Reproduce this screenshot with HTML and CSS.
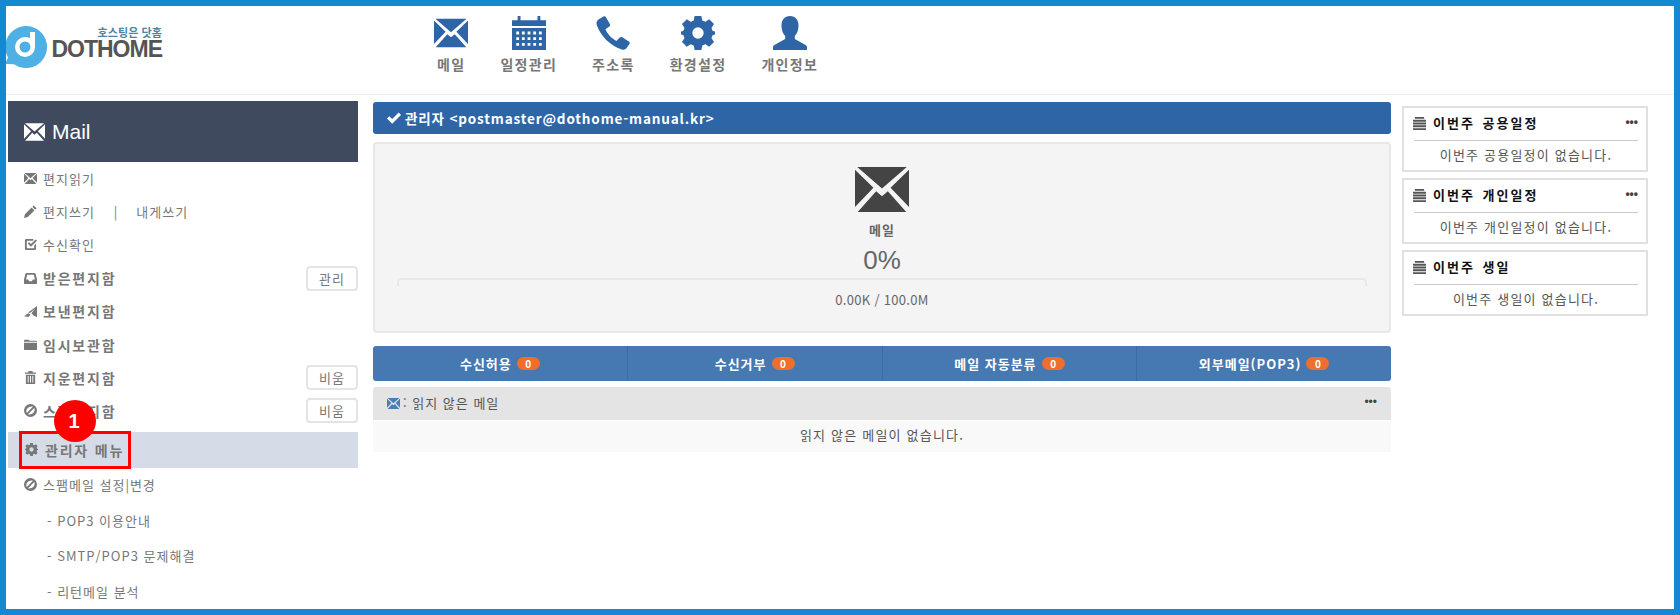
FILE: index.html
```html
<!DOCTYPE html>
<html lang="ko">
<head>
  <meta charset="UTF-8" />
  <title>DOTHOME Mail</title>
  <link rel="stylesheet" href="styles.css">
</head>
<body>

  <svg class="sprite" xmlns="http://www.w3.org/2000/svg">
    <symbol id="i-mail" viewBox="0 0 24 20">
      <path d="M1 0H23L12 9.5Z M0 1.2V17.8L8.2 9.2Z M24 1.2V17.8L15.8 9.2Z M1.2 20L9.4 10.8 12 13 14.6 10.8 22.8 20Z"/>
    </symbol>
    <symbol id="i-cal" viewBox="0 0 24 24">
      <path fill-rule="evenodd" d="M0 3H4V0H6V3H18V0H20V3H24V7H0Z M0 8.5H24V24H0Z M3 11V13H5V11Z M7 11V13H9V11Z M11 11V13H13V11Z M15 11V13H17V11Z M19 11V13H21V11Z M3 15V17H5V15Z M7 15V17H9V15Z M11 15V17H13V15Z M15 15V17H17V15Z M19 15V17H21V15Z M3 19V21H5V19Z M7 19V21H9V19Z M11 19V21H13V19Z M15 19V21H17V19Z M19 19V21H21V19Z"/>
    </symbol>
    <symbol id="i-phone" viewBox="0 0 24 24">
      <path d="M5.200 0.400C6 0 6.600 0.200 7 0.800L9.800 5.600C10.200 6.300 10 6.900 9.400 7.400L6.600 9.400C7.800 12.400 10.800 15.800 14.400 17.600L16.600 15.300C17.200 14.700 17.800 14.600 18.500 15L23.200 18C23.900 18.500 24 19.100 23.600 19.800L21.600 22.600C20.800 23.600 19.600 24 18.200 23.600C9.600 20.900 3.400 14.200 0.600 6.600C0.100 5 0.300 3.600 1.500 2.600Z"/>
    </symbol>
    <symbol id="i-gear" viewBox="0 0 24 24">
      <path fill-rule="evenodd" d="M9.600 0H14.400L15 3.200 17.200 4.100 19.900 2.300 23.300 5.700 21.500 8.400 22.400 10.600 24 11V13L22.400 13.400 21.500 15.600 23.300 18.300 19.900 21.700 17.200 19.900 15 20.800 14.400 24H9.600L9 20.800 6.800 19.900 4.100 21.700 0.700 18.300 2.500 15.600 1.600 13.400 0 13V11L1.600 10.600 2.500 8.400 0.700 5.700 4.100 2.300 6.800 4.100 9 3.200Z M12 8A4 4 0 1 0 12 16 4 4 0 1 0 12 8Z"/>
    </symbol>
    <symbol id="i-user" viewBox="0 0 24 24">
      <path d="M12 0C15.800 0 18 2.800 18 6.800 18 9.800 17 12.400 15.400 14.200V16.200L23 20.400C23.700 20.800 24 21.400 24 22.200V24H0V22.200C0 21.400 0.300 20.800 1 20.400L8.600 16.200V14.200C7 12.400 6 9.800 6 6.800 6 2.800 8.200 0 12 0Z"/>
    </symbol>
    <symbol id="i-pencil" viewBox="0 0 14 14">
      <path d="M10.500 0.500L13.500 3.500 12 5 9 2Z M8.200 2.800L11.200 5.800 4 13 0 14 1 10Z"/>
    </symbol>
    <symbol id="i-check" viewBox="0 0 14 14">
      <path d="M2.500 1H10V3H3V11H11V8L13 6V11.500C13 12.400 12.400 13 11.500 13H2.500C1.600 13 1 12.400 1 11.500V2.500C1 1.600 1.600 1 2.500 1Z M4 6L5.500 4.500 7.500 6.500 12.500 1.500 14 3 7.500 9.500Z"/>
    </symbol>
    <symbol id="i-inbox" viewBox="0 0 14 14">
      <path fill-rule="evenodd" d="M3 1H11C11.800 1 12.300 1.400 12.500 2L14 8V12C14 12.600 13.600 13 13 13H1C0.400 13 0 12.600 0 12V8L1.500 2C1.700 1.400 2.200 1 3 1Z M3.500 3L2.200 8H4.500L5.500 10H8.500L9.500 8H11.800L10.500 3Z"/>
    </symbol>
    <symbol id="i-send" viewBox="0 0 14 14">
      <path d="M14 1V13L10.500 11.500 8 9 12 4 6.500 8.500 4.500 8Z M0 12L4.500 9 7 10 5 13Z"/>
    </symbol>
    <symbol id="i-folder" viewBox="0 0 14 14">
      <path d="M0 4V2.800C0 2.200 0.400 2 1 2H5L6 3H13C13.600 3 14 3.400 14 4Z M0 5H14V12C14 12.600 13.600 13 13 13H1C0.400 13 0 12.600 0 12Z"/>
    </symbol>
    <symbol id="i-trash" viewBox="0 0 14 14">
      <path fill-rule="evenodd" d="M5 0H9L9.600 1.500H13V3H1V1.500H4.400Z M2 4H12V14H2Z M4 5.500V12.500H5V5.500Z M6.500 5.500V12.500H7.500V5.500Z M9 5.500V12.500H10V5.500Z"/>
    </symbol>
    <symbol id="i-ban" viewBox="0 0 14 14">
      <path fill-rule="evenodd" d="M7 0A7 7 0 1 1 7 14 7 7 0 1 1 7 0Z M9.600 3L3 9.600C2.200 7.900 2.400 6 3.800 4.600S7.900 2.200 9.600 3Z M11 4.400C11.800 6.100 11.600 8 10.200 9.400S6.100 11.800 4.400 11Z"/>
    </symbol>
    <symbol id="i-list" viewBox="0 0 14 14">
      <path d="M2 0H12V2H2Z M0 3H14V5H0Z M0 6H14V8H0Z M0 9H14V11H0Z M0 12H14V14H0Z"/>
    </symbol>
    <symbol id="i-ok" viewBox="0 0 14 14">
      <path d="M0 7.500L2.300 5.200 5.200 8.100 11.700 1.600 14 3.900 5.200 12.700Z"/>
    </symbol>
  </svg>

  <div class="frame">
    <header class="top">
      <div class="logo">
        <svg class="logo-mark" viewBox="0 0 42 42">
          <path fill="#4fb0e6" d="M21 0A21 21 0 1 1 9 38.200L0 38 3 31.500A21 21 0 0 1 21 0Z"/>
          <path fill="#fff" fill-rule="evenodd" d="M25 6H30V21A10 10 0 1 1 20 11C22 11 23.600 11.500 25 12.300Z M20 15.500A5.500 5.500 0 1 0 20 26.500 5.500 5.500 0 1 0 20 15.500Z"/>
        </svg>
        <div class="logo-text">
          <span class="logo-sub">호스팅은 닷홈</span>
          <span class="logo-name">DOTHOME</span>
        </div>
      </div>
      <nav class="top-nav">
        <a class="top-item"><svg class="top-icon"><use href="#i-mail"/></svg>메일</a>
        <a class="top-item"><svg class="top-icon"><use href="#i-cal"/></svg>일정관리</a>
        <a class="top-item"><svg class="top-icon"><use href="#i-phone"/></svg>주소록</a>
        <a class="top-item"><svg class="top-icon"><use href="#i-gear"/></svg>환경설정</a>
        <a class="top-item"><svg class="top-icon"><use href="#i-user"/></svg>개인정보</a>
      </nav>
    </header>

    <div class="columns">
      <aside class="side">
        <div class="side-title"><svg class="side-title-icon"><use href="#i-mail"/></svg>Mail</div>
        <ul class="menu">
          <li class="menu-row"><svg class="ico"><use href="#i-mail"/></svg>편지읽기</li>
          <li class="menu-row"><svg class="ico"><use href="#i-pencil"/></svg>편지쓰기<span class="sep">|</span>내게쓰기</li>
          <li class="menu-row"><svg class="ico"><use href="#i-check"/></svg>수신확인</li>
          <li class="menu-row strong"><svg class="ico"><use href="#i-inbox"/></svg>받은편지함<button class="mini">관리</button></li>
          <li class="menu-row strong"><svg class="ico"><use href="#i-send"/></svg>보낸편지함</li>
          <li class="menu-row strong"><svg class="ico"><use href="#i-folder"/></svg>임시보관함</li>
          <li class="menu-row strong"><svg class="ico"><use href="#i-trash"/></svg>지운편지함<button class="mini">비움</button></li>
          <li class="menu-row strong"><svg class="ico"><use href="#i-ban"/></svg>스팸편지함<button class="mini">비움</button></li>
          <li class="menu-row strong admin">
            <span class="marker">1</span>
            <span class="admin-box"><svg class="ico"><use href="#i-gear"/></svg>관리자 메뉴</span>
          </li>
          <li class="menu-row"><svg class="ico"><use href="#i-ban"/></svg>스팸메일 설정|변경</li>
          <li class="menu-row sub">- POP3 이용안내</li>
          <li class="menu-row sub">- SMTP/POP3 문제해결</li>
          <li class="menu-row sub">- 리턴메일 분석</li>
        </ul>
      </aside>

      <main class="main">
        <div class="account"><svg class="ico-ok"><use href="#i-ok"/></svg>관리자 &lt;postmaster@dothome-manual.kr&gt;</div>

        <section class="usage">
          <svg class="usage-icon"><use href="#i-mail"/></svg>
          <div class="usage-label">메일</div>
          <div class="usage-pct">0%</div>
          <div class="usage-bar"></div>
          <div class="usage-size">0.00K / 100.0M</div>
        </section>

        <div class="tabs">
          <a class="tab">수신허용 <span class="badge">0</span></a>
          <a class="tab">수신거부 <span class="badge">0</span></a>
          <a class="tab">메일 자동분류 <span class="badge">0</span></a>
          <a class="tab">외부메일(POP3) <span class="badge">0</span></a>
        </div>

        <div class="unread-head">
          <span><svg class="ico ico-blue"><use href="#i-mail"/></svg>: 읽지 않은 메일</span>
          <span class="more">•••</span>
        </div>
        <div class="unread-body">읽지 않은 메일이 없습니다.</div>
      </main>

      <aside class="right">
        <section class="panel">
          <h4 class="panel-head"><span><svg class="ico-list"><use href="#i-list"/></svg>이번주 공용일정</span><span class="more">•••</span></h4>
          <p class="panel-text">이번주 공용일정이 없습니다.</p>
        </section>
        <section class="panel">
          <h4 class="panel-head"><span><svg class="ico-list"><use href="#i-list"/></svg>이번주 개인일정</span><span class="more">•••</span></h4>
          <p class="panel-text">이번주 개인일정이 없습니다.</p>
        </section>
        <section class="panel">
          <h4 class="panel-head"><span><svg class="ico-list"><use href="#i-list"/></svg>이번주 생일</span></h4>
          <p class="panel-text">이번주 생일이 없습니다.</p>
        </section>
      </aside>
    </div>
  </div>

</body>
</html>
```

FILE: styles.css
```css
* {
  box-sizing: border-box;
}
html, body {
  margin: 0;
  height: 100%;
  overflow: hidden;
}
body {
  font-family: "Noto Sans CJK KR", "Liberation Sans", sans-serif;
  font-size: 13px;
  color: #666;
  background: #fff;
}
.sprite {
  display: none;
}
.frame {
  height: 615px;
  border: 6px solid #1488d0;
  overflow: hidden;
}
svg {
  fill: currentColor;
}

/* top */
.top {
  display: flex;
  height: 89px;
  border-bottom: 1px solid #eee;
}
.logo {
  width: 431px;
  display: flex;
  padding-top: 20px;
}
.logo-mark {
  width: 42px;
  height: 42px;
  margin-left: -1px;
}
.logo-text {
  display: flex;
  flex-direction: column;
  align-items: flex-end;
  margin-left: 5px;
  width: 110px;
}
.logo-sub {
  font-size: 11px;
  line-height: 13px;
  font-weight: 700;
  color: #4d83a8;
  letter-spacing: 0.1px;
}
.logo-name {
  font-family: "Liberation Sans", sans-serif;
  font-size: 23px;
  line-height: 17px;
  margin-top: 2px;
  font-weight: 700;
  color: #555;
  letter-spacing: -1px;
}
.top-nav {
  display: flex;
  gap: 35px;
  padding-top: 10px;
}
.top-item {
  display: flex;
  flex-direction: column;
  align-items: center;
  font-size: 14px;
  font-weight: 700;
  line-height: 20px;
  color: #777;
  letter-spacing: 1.3px;
}
.top-icon {
  width: 34px;
  height: 34px;
  margin: 0 -4px 4px;
  color: #2d65a6;
}

/* layout */
.columns {
  display: flex;
  padding: 6px 0 0 2px;
}
.side {
  width: 350px;
  flex: none;
}
.main {
  width: 1018px;
  flex: none;
  margin-left: 15px;
  padding-top: 1px;
}
.right {
  width: 246px;
  flex: none;
  margin-left: 11px;
  padding-top: 5px;
  display: flex;
  flex-direction: column;
  gap: 6px;
}

/* sidebar */
.side-title {
  display: flex;
  align-items: center;
  height: 61px;
  padding-left: 16px;
  background: #3f4a5f;
  color: #fff;
  font-family: "Liberation Sans", sans-serif;
  font-size: 21px;
}
.side-title-icon {
  width: 21px;
  height: 18px;
  margin-right: 7px;
}
.menu {
  list-style: none;
  margin: 0;
  padding: 0;
}
.menu-row {
  display: flex;
  align-items: center;
  height: 33.2px;
  padding-left: 16px;
  font-size: 13px;
  color: #777;
  letter-spacing: 1px;
}
.menu-row.strong {
  font-size: 14px;
  font-weight: 700;
  letter-spacing: 1.8px;
}
.menu-row.sub {
  padding: 3px 0 0 39px;
  height: 35.5px;
}
.ico {
  width: 13px;
  height: 13px;
  margin-right: 6px;
  flex: none;
}
.ico-blue {
  color: #4a7fb5;
  vertical-align: -2px;
  margin-right: 3px;
}
.sep {
  margin: 0 19px;
  letter-spacing: 0;
}
.mini {
  margin-left: auto;
  width: 52px;
  height: 25px;
  padding: 0;
  border: 2px solid #e4e4e4;
  border-radius: 4px;
  background: #fff;
  font-family: inherit;
  font-size: 13px;
  color: #777;
  letter-spacing: 1px;
}
.admin {
  position: relative;
  height: 36px;
  margin-top: 4.4px;
  padding-left: 0;
  background: #d5dbe7;
  letter-spacing: 1.2px;
}
.admin-box {
  display: flex;
  align-items: center;
  width: 112px;
  height: 38px;
  margin-left: 11px;
  padding-left: 3px;
  border: 3px solid #f00;
  white-space: nowrap;
}
.admin-box .ico {
  margin-right: 7px;
}
.marker {
  position: absolute;
  left: 46px;
  top: -32px;
  width: 42px;
  height: 42px;
  border-radius: 50%;
  background: #f00;
  color: #fff;
  font-family: "Liberation Sans", sans-serif;
  font-size: 20px;
  font-weight: 700;
  line-height: 42px;
  text-align: center;
}

/* account bar and usage card */
.account {
  display: flex;
  align-items: center;
  height: 32px;
  padding-left: 14px;
  padding-bottom: 1px;
  background: #2e65a6;
  border-radius: 3px;
  color: #fff;
  font-weight: 700;
  font-size: 13.5px;
  letter-spacing: 0.85px;
}
.ico-ok {
  width: 14px;
  height: 14px;
  margin-right: 4px;
}
.usage {
  display: flex;
  flex-direction: column;
  align-items: center;
  height: 191px;
  margin-top: 8px;
  padding-top: 23px;
  background: #f4f4f4;
  border: 2px solid #e8e8e8;
  border-radius: 4px;
}
.usage-icon {
  width: 54px;
  height: 45px;
  color: #444;
}
.usage-label {
  margin-top: 9px;
  font-size: 13px;
  line-height: 18px;
  font-weight: 700;
  letter-spacing: 1px;
}
.usage-pct {
  font-size: 26px;
  line-height: 34px;
  margin-top: 4px;
  font-family: "Liberation Sans", sans-serif;
}
.usage-bar {
  width: 970px;
  height: 8px;
  margin-top: 1px;
  border: 2px solid #e8e8e8;
  border-bottom: 0;
  border-radius: 4px 4px 0 0;
}
.usage-size {
  margin-top: 4px;
  font-size: 13px;
  line-height: 20px;
  letter-spacing: 0.3px;
}

/* tabs */
.tabs {
  display: flex;
  height: 35px;
  margin-top: 13px;
  background: #4678b2;
  border-radius: 3px;
}
.tab {
  flex: 1;
  display: flex;
  align-items: center;
  justify-content: center;
  gap: 5px;
  color: #fff;
  font-weight: 700;
  font-size: 13px;
  letter-spacing: 1px;
  border-left: 1px solid #3c6ca4;
}
.tab:first-child {
  border-left: 0;
}
.badge {
  display: inline-block;
  min-width: 23px;
  height: 13px;
  border-radius: 7px;
  background: #ee6f2d;
  font-size: 10px;
  line-height: 13px;
  text-align: center;
  color: #fff;
  letter-spacing: 0;
}

/* unread */
.unread-head {
  display: flex;
  justify-content: space-between;
  align-items: center;
  height: 33px;
  margin-top: 6px;
  padding: 0 14px 3px;
  background: #e4e4e4;
  border-radius: 3px 3px 0 0;
  color: #555;
  letter-spacing: 1px;
}
.more {
  font-family: "Liberation Sans", sans-serif;
  font-size: 12px;
  line-height: 12px;
  letter-spacing: 0;
  color: #444;
}
.unread-body {
  height: 31px;
  line-height: 27px;
  margin-top: 1px;
  background: #f9f9f9;
  text-align: center;
  color: #555;
  letter-spacing: 1.2px;
}

/* right panels */
.panel {
  height: 66px;
  padding: 0 8px 0 10px;
  border: 2px solid #e0e0e0;
}
.panel-head {
  display: flex;
  justify-content: space-between;
  align-items: center;
  height: 33px;
  margin: 0;
  padding-bottom: 4px;
  border-bottom: 1px solid #ccc;
  font-size: 13px;
  font-weight: 700;
  color: #111;
  letter-spacing: 2px;
  word-spacing: 2px;
}
.ico-list {
  width: 13px;
  height: 13px;
  margin-right: 7px;
  margin-left: -1px;
  vertical-align: -2px;
  color: #555;
}
.panel-text {
  margin: 0;
  line-height: 28px;
  text-align: center;
  color: #555;
  font-size: 13px;
  letter-spacing: 1.2px;
}
```
